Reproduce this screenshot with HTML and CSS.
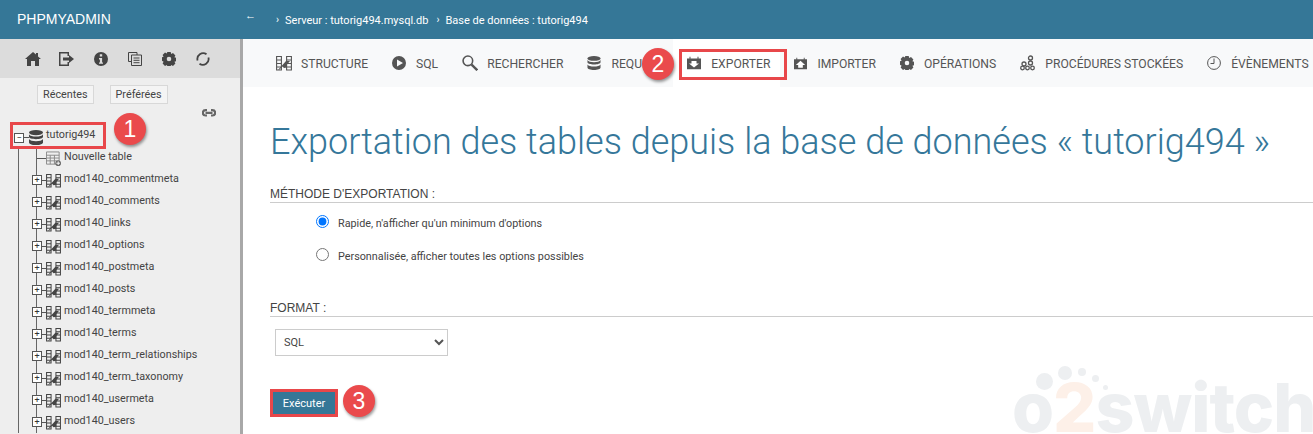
FILE: index.html
```html
<!DOCTYPE html>
<html lang="fr">
<head>
  <meta charset="UTF-8">
  <meta name="viewport" content="width=device-width, initial-scale=1.0">
  <title>Exporter - phpMyAdmin</title>
  <link rel="stylesheet" href="styles.css">
</head>
<body>
  <svg class="sprites" width="0" height="0">
    <symbol id="i-db" viewBox="0 0 14 15">
      <ellipse cx="7" cy="2.6" rx="7" ry="2.6"/>
      <path d="M0 4.2C1 6 3.5 6.6 7 6.6s6-.6 7-2.4v2.6C14 8.200 11 9.200 7 9.200S0 8.200 0 6.800z"/>
      <path d="M0 9C1 10.600 3.500 11.200 7 11.200s6-.6 7-2.200v3.400C14 13.900 11 15 7 15s-7-1.100-7-2.600z"/>
    </symbol>
    <symbol id="i-table" viewBox="0 0 16 16">
      <path fill="none" stroke="currentColor" stroke-width="1.100" d="M.6 1.500h4.800v13.500H.6zM.6 5h4.800M.6 8.500h4.800M.6 12h4.800M10.600 1.500h4.800v13.500h-4.800zM10.600 5h4.800M10.600 8.500h4.800M10.600 12h4.800"/>
      <path d="M2 15l8-9h4l-3 3.500v3l-3 .5-1.500-1.500-3 3z"/>
    </symbol>
    <symbol id="i-gear" viewBox="0 0 14 14">
      <path fill-rule="evenodd" d="M5.300 0h3.400l.5 2 1.800-1 2.400 2.400-1 1.800 1.600.5v3.600l-1.600.5 1 1.800-2.400 2.400-1.800-1-.5 1H5.300l-.5-1-1.800 1L.6 11.600l1-1.800L0 8.800V5.200l1.600-.5-1-1.800L3 .5l1.800 1zM7 4.700a2.300 2.300 0 1 0 0 4.600 2.300 2.300 0 0 0 0-4.600z"/>
    </symbol>
    <symbol id="i-tab" viewBox="0 0 14 13">
      <path d="M0 2h2.500V0h1v2h7V0h1v2H14v11H0z"/>
    </symbol>
  </svg>

  <header class="topbar">
    <div class="brand">PHPMYADMIN</div>
    <div class="back">←</div>
    <nav class="crumbs">
      <span class="sep">›</span><span>Serveur : tutorig494.mysql.db</span>
      <span class="sep">›</span><span>Base de données : tutorig494</span>
    </nav>
  </header>

  <div class="main">
    <aside class="sidebar">
      <div class="side-icons">
        <svg class="side-icon" viewBox="0 0 16 14"><path d="M8 0l3 2.600V1h2v3.400L16 7h-2v7h-4V9H6v5H2V7H0z"/></svg>
        <svg class="side-icon" viewBox="0 0 16 14"><path d="M0 0h10v4H8.500V1.500h-7v11h7V10H10v4H0z"/><path d="M4 5.500h6V3l5 4-5 4V8.500H4z"/></svg>
        <svg class="side-icon" viewBox="0 0 14 14"><path fill-rule="evenodd" d="M7 0a7 7 0 1 1 0 14A7 7 0 0 1 7 0zM5.800 2.200v2.300h2.400V2.200zM5 6v1.400h.9v3H5v1.400h4v-1.400h-.9V6z"/></svg>
        <svg class="side-icon" viewBox="0 0 14 14"><path fill="none" stroke="currentColor" d="M.5.500h8.500v2.500M.5.500v9H3.500M3.500 3h10v10.500h-10zM5.500 6h6M5.500 8.300h6M5.500 10.700h6"/></svg>
        <svg class="side-icon" viewBox="0 0 14 14"><use href="#i-gear"/></svg>
        <svg class="side-icon" viewBox="0 0 14 14"><path fill="none" stroke="currentColor" stroke-width="1.800" d="M10.500 2.200A5.800 5.800 0 0 0 1.600 8.500M3.500 11.800a5.800 5.800 0 0 0 8.900-6.300"/></svg>
      </div>
      <div class="side-tabs">
        <button class="side-tab">Récentes</button>
        <button class="side-tab">Préférées</button>
      </div>
      <div class="link-row">
        <svg class="link-icon" viewBox="0 0 14 8"><path fill="none" stroke="currentColor" stroke-width="2.200" d="M5 1.200H3.500a2.500 2.500 0 0 0 0 5.300H5M9 1.200h1.500a2.500 2.500 0 0 1 0 5.300H9M3.500 3.800h7"/></svg>
      </div>
      <div class="tree">
        <div class="db-row">
          <span class="box">−</span><span class="dash"></span>
          <svg class="db-icon"><use href="#i-db"/></svg>
          <span class="db-name">tutorig494</span>
        </div>
        <div class="db-children">
          <ul class="tables">
            <li class="new-table">
              <span class="dash"></span>
              <svg class="row-icon" viewBox="0 0 16 16"><path fill="none" stroke="#888" d="M.5 1h13.500v13H.5zM.5 4.500h13.500M.5 7.500h13.500M.5 10.500h13.500M4.500 4.500V14M9 4.500V14"/><circle cx="13" cy="13" r="3" fill="#666"/><path stroke="#fff" d="M11 13h4M13 11v4"/></svg>
              <span>Nouvelle table</span>
            </li>
            <li><span class="box">+</span><span class="dash short"></span><svg class="row-icon"><use href="#i-table"/></svg><span>mod140_commentmeta</span></li>
            <li><span class="box">+</span><span class="dash short"></span><svg class="row-icon"><use href="#i-table"/></svg><span>mod140_comments</span></li>
            <li><span class="box">+</span><span class="dash short"></span><svg class="row-icon"><use href="#i-table"/></svg><span>mod140_links</span></li>
            <li><span class="box">+</span><span class="dash short"></span><svg class="row-icon"><use href="#i-table"/></svg><span>mod140_options</span></li>
            <li><span class="box">+</span><span class="dash short"></span><svg class="row-icon"><use href="#i-table"/></svg><span>mod140_postmeta</span></li>
            <li><span class="box">+</span><span class="dash short"></span><svg class="row-icon"><use href="#i-table"/></svg><span>mod140_posts</span></li>
            <li><span class="box">+</span><span class="dash short"></span><svg class="row-icon"><use href="#i-table"/></svg><span>mod140_termmeta</span></li>
            <li><span class="box">+</span><span class="dash short"></span><svg class="row-icon"><use href="#i-table"/></svg><span>mod140_terms</span></li>
            <li><span class="box">+</span><span class="dash short"></span><svg class="row-icon"><use href="#i-table"/></svg><span>mod140_term_relationships</span></li>
            <li><span class="box">+</span><span class="dash short"></span><svg class="row-icon"><use href="#i-table"/></svg><span>mod140_term_taxonomy</span></li>
            <li><span class="box">+</span><span class="dash short"></span><svg class="row-icon"><use href="#i-table"/></svg><span>mod140_usermeta</span></li>
            <li><span class="box">+</span><span class="dash short"></span><svg class="row-icon"><use href="#i-table"/></svg><span>mod140_users</span></li>
          </ul>
        </div>
      </div>
    </aside>

    <main class="content">
      <nav class="tabs">
        <a class="tab"><svg class="tab-icon wide"><use href="#i-table"/></svg>Structure</a>
        <a class="tab"><svg class="tab-icon" viewBox="0 0 14 14"><path fill-rule="evenodd" d="M7 0a7 7 0 1 1 0 14A7 7 0 0 1 7 0zM5 3.500v7L11 7z"/></svg>SQL</a>
        <a class="tab"><svg class="tab-icon wide" viewBox="0 0 15 15"><circle cx="5.500" cy="5.500" r="4.500" fill="none" stroke="currentColor" stroke-width="1.500"/><path stroke="currentColor" stroke-width="2.200" d="M9 9l5.300 5.300"/></svg>Rechercher</a>
        <a class="tab"><svg class="tab-icon"><use href="#i-db"/></svg>Requête</a>
        <a class="tab active"><svg class="tab-icon" viewBox="0 0 14 13"><use href="#i-tab"/><path fill="#fff" d="M4.500 4.500h5v2.500H12L7 11 2 7h2.500z"/></svg>Exporter</a>
        <a class="tab"><svg class="tab-icon small" viewBox="0 0 14 13"><use href="#i-tab"/><path fill="#fff" d="M7 3.500L12 8H9.500v3h-5V8H2z"/></svg>Importer</a>
        <a class="tab"><svg class="tab-icon"><use href="#i-gear"/></svg>Opérations</a>
        <a class="tab"><svg class="tab-icon procs" viewBox="0 0 16 16"><g fill="none" stroke="currentColor" stroke-width="1.300"><circle cx="10.500" cy="3" r="2"/><circle cx="10.500" cy="8" r="2"/><circle cx="4" cy="9" r="2"/><circle cx="2.500" cy="13" r="1.800"/><circle cx="7.500" cy="13" r="1.800"/><circle cx="12.500" cy="13" r="1.800"/></g></svg>Procédures stockées</a>
        <a class="tab"><svg class="tab-icon" viewBox="0 0 14 14"><circle cx="7" cy="7" r="6.400" fill="none" stroke="currentColor"/><path fill="none" stroke="currentColor" d="M7 2.500V7.500H3.500"/></svg>Évènements</a>
      </nav>

      <div class="page">
        <h2 class="title">Exportation des tables depuis la base de données « tutorig494 »</h2>

        <h3 class="section-head">MÉTHODE D'EXPORTATION :</h3>
        <div class="options">
          <label class="option"><input type="radio" name="method" checked>Rapide, n'afficher qu'un minimum d'options</label>
          <label class="option"><input type="radio" name="method">Personnalisée, afficher toutes les options possibles</label>
        </div>

        <h3 class="section-head format-head">FORMAT :</h3>
        <div class="select-wrap">
          <select class="format-select"><option>SQL</option></select>
          <svg class="chevron" viewBox="0 0 10 7"><path fill="none" stroke="currentColor" stroke-width="2" d="M1 1l4 4 4-4"/></svg>
        </div>

        <button class="submit">Exécuter</button>
      </div>
    </main>
  </div>

  <!-- watermark -->
  <div class="watermark">
    <span class="dot d1"></span><span class="dot d2"></span><span class="dot d3"></span><span class="dot d4"></span><span class="dot d5"></span>
    <span class="wm-text">o<b>2</b>switch</span>
  </div>

  <!-- annotations -->
  <div class="mark m1"></div>
  <div class="mark m2"></div>
  <div class="mark m3"></div>
  <div class="badge b1">1</div>
  <div class="badge b2">2</div>
  <div class="badge b3">3</div>
</body>
</html>
```

FILE: styles.css
```css
html, body {
  margin: 0;
  height: 434px;
  overflow: hidden;
}
body {
  position: relative;
  font-family: Roboto, "Liberation Sans", sans-serif;
  background: #fff;
  color: #444;
}
.sprites {
  position: absolute;
}
svg {
  fill: currentColor;
  display: block;
  flex: none;
}

/* top bar */
.topbar {
  display: flex;
  align-items: center;
  height: 39px;
  background: #357797;
  color: #fff;
}
.brand {
  width: 245px;
  padding-left: 17px;
  margin-top: -2px;
  box-sizing: border-box;
  font-family: "Liberation Sans", Arial, sans-serif;
  font-size: 14px;
}
.back {
  width: 29px;
  margin-top: -8px;
  font-size: 11px;
}
.crumbs {
  display: flex;
  gap: 6px;
  font-size: 11px;
  margin-top: 2px;
}
.crumbs .sep {
  margin-left: 2px;
  font-size: 10px;
}

.main {
  display: flex;
  height: 395px;
}

/* sidebar */
.sidebar {
  width: 240px;
  flex: none;
  background: #eee;
  border-right: 3px solid #a8a8a8;
}
.side-icons {
  display: flex;
  align-items: center;
  height: 39px;
  padding-left: 25px;
  gap: 18px;
  background: #dcdcdc;
  color: #444;
}
.side-icon {
  width: 16px;
  height: 14px;
}
.side-tabs {
  display: flex;
  gap: 16px;
  padding: 7px 0 0 37px;
}
.side-tab {
  height: 19px;
  padding: 0 5px;
  border: 1px solid #d8d8d8;
  background: #f4f4f4;
  font: 10.8px Roboto, sans-serif;
  color: #444;
}
.link-row {
  display: flex;
  justify-content: flex-end;
  padding: 5px 24px 0 0;
  color: #666;
}
.link-icon {
  width: 14px;
  height: 8px;
}

/* tree */
.tree {
  font-size: 10.75px;
  color: #444;
  padding-top: 11px;
}
.db-row {
  display: flex;
  align-items: center;
  height: 19px;
  padding-left: 14px;
}
.box {
  width: 8px;
  height: 8px;
  border: 1px solid #555;
  background: #fff;
  flex: none;
  font-size: 9px;
  line-height: 8px;
  text-align: center;
  color: #333;
  z-index: 1;
}
.dash {
  width: 5px;
  height: 1px;
  background: #555;
  flex: none;
}
.db-icon {
  width: 14px;
  height: 15px;
  margin-right: 3px;
  color: #444;
}
.db-name {
  margin-top: -7px;
}
.db-children {
  margin-left: 18px;
  border-left: 1px solid #666;
  padding-left: 17px;
}
.tables {
  list-style: none;
  margin: 0;
  padding: 0;
  border-left: 1px solid #666;
}
.tables li {
  display: flex;
  align-items: center;
  height: 22px;
  margin-left: -5px;
}
.tables li > span:last-child {
  margin-top: -4px;
  margin-left: 3px;
  white-space: nowrap;
}
.new-table {
  padding-left: 5px;
}
.new-table .dash {
  width: 9px;
}
.tables .dash.short {
  width: 4px;
}
.row-icon {
  width: 15px;
  height: 15px;
  color: #444;
}

/* nav tabs */
.content {
  flex: 1;
  min-width: 0;
}
.tabs {
  display: flex;
  height: 48px;
  padding-left: 19px;
  background: #f8f9fa;
  white-space: nowrap;
}
.tab {
  display: flex;
  align-items: center;
  gap: 10px;
  padding: 2px 10px 0 14px;
  font-size: 12.15px;
  text-transform: uppercase;
  color: #555;
}
.tab.active {
  background: #fff;
}
.tab-icon {
  width: 14px;
  height: 14px;
  margin-top: -2px;
}
.tab-icon.wide {
  width: 16px;
  height: 16px;
  margin-right: -1px;
}
.tab-icon.small {
  width: 13px;
  height: 13px;
}
.tab-icon.procs {
  width: 16px;
  height: 16px;
  margin-right: -1px;
}

/* export form */
.page {
  padding: 1px 0 0 27px;
}
.title {
  margin: 32px 0 23px 0;
  font-size: 36px;
  font-weight: 300;
  line-height: 44px;
  color: #35779a;
  white-space: nowrap;
}
.section-head {
  margin: 0;
  padding-bottom: 1px;
  border-bottom: 1px solid #ccc;
  font-family: "Liberation Sans", Arial, sans-serif;
  font-size: 12px;
  font-weight: normal;
  line-height: 14px;
  color: #444;
}
.format-head {
  margin-top: 35px;
}
.options {
  display: flex;
  flex-direction: column;
  gap: 13px;
  padding: 10px 0 0 46px;
}
.option {
  display: flex;
  align-items: center;
  gap: 9px;
  height: 20px;
  font-size: 10.8px;
}
.option input {
  width: 13px;
  height: 13px;
  margin: 0 0 4px;
  accent-color: #0075ff;
}
.select-wrap {
  position: relative;
  width: 173px;
  margin: 12px 0 33px 5px;
}
.format-select {
  display: block;
  width: 100%;
  height: 27px;
  padding: 0 8px;
  border: 1px solid #ccc;
  background: #fff;
  appearance: none;
  font: 11px Roboto, sans-serif;
  color: #444;
}
.chevron {
  position: absolute;
  right: 4px;
  top: 10px;
  width: 10px;
  height: 7px;
  color: #555;
}
.submit {
  display: block;
  width: 68px;
  height: 28px;
  border: none;
  background: #357797;
  color: #fff;
  font: 11px Roboto, sans-serif;
}

/* o2switch watermark */
.watermark {
  position: absolute;
  left: 1012px;
  top: 365px;
  width: 301px;
  height: 69px;
}
.wm-text {
  position: absolute;
  left: 0;
  top: 17px;
  font-family: Inter, sans-serif;
  font-size: 68px;
  font-weight: 800;
  letter-spacing: -1px;
  line-height: 50px;
  color: #edeff1;
  white-space: nowrap;
}
.wm-text b {
  font-weight: 800;
  color: #fdf0e8;
}
.dot {
  position: absolute;
  border-radius: 50%;
  background: #edeff1;
}
.d1 { left: 24px; top: 8px; width: 17px; height: 17px; }
.d2 { left: 46px; top: 1px; width: 14px; height: 14px; }
.d3 { left: 66px; top: 3px; width: 8px; height: 8px; }
.d4 { left: 80px; top: 10px; width: 7px; height: 7px; }
.d5 { left: 91px; top: 20px; width: 5px; height: 5px; }

/* red annotations */
.mark {
  position: absolute;
  border: 3px solid #e8474a;
  box-sizing: border-box;
}
.m1 { left: 10px; top: 122px; width: 96px; height: 27px; }
.m2 { left: 679px; top: 49px; width: 108px; height: 31px; }
.m3 { left: 270px; top: 389px; width: 68px; height: 28px; }
.badge {
  position: absolute;
  width: 32px;
  height: 32px;
  border-radius: 50%;
  background: #ea4a4c;
  box-shadow: 1px 2px 3px rgba(0, 0, 0, .4);
  color: #fff;
  font-family: "Liberation Sans", Arial, sans-serif;
  font-size: 23px;
  line-height: 32px;
  text-align: center;
}
.b1 { left: 114px; top: 113px; }
.b2 { left: 642px; top: 48px; }
.b3 { left: 343px; top: 385px; }
```
